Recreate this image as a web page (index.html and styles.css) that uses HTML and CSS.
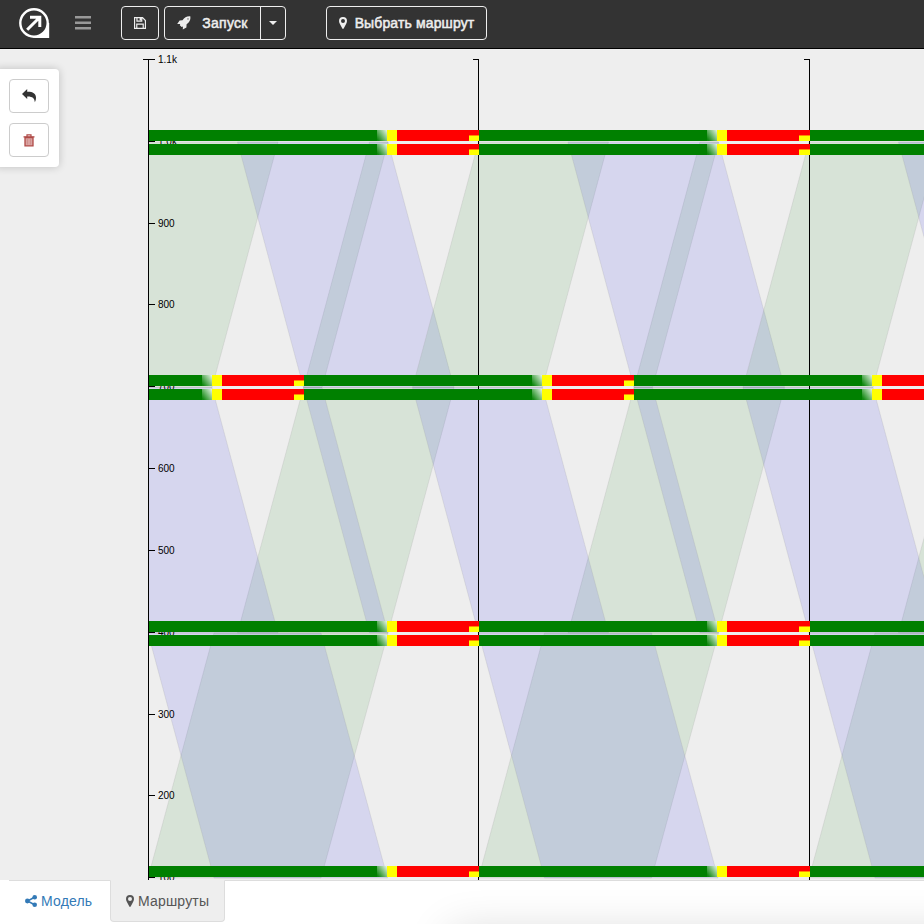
FILE: index.html
```
<!DOCTYPE html>
<html lang="ru">
<head>
<meta charset="utf-8">
<title>Маршруты</title>
<link rel="stylesheet" href="styles.css">
</head>
<body>
<header class="navbar">
  <svg class="logo" width="32" height="32" viewBox="0 0 32 32"><path fill="#fff" d="M30 16h1.2v15H16z"/><circle cx="16" cy="16" r="13.7" fill="#333" stroke="#fff" stroke-width="2.4"/><path d="M9.200 22.800 21 11M12 10.200h9.800v9.800" fill="none" stroke="#fff" stroke-width="3"/></svg>
  <svg class="menu" width="16" height="14" viewBox="0 0 16 14"><path d="M0 1.3h16M0 6.8h16M0 12.3h16" stroke="#999" stroke-width="2.4"/></svg>
  <button class="btn save"><svg width="12" height="12" viewBox="0 0 13 13"><path d="M.6.6h8.6l3.2 3.2v8.6H.6zM3.2.8v3.7h5.2V.8M3 12.3V7.7h7v4.6" fill="none" stroke="#eee" stroke-width="1.3"/><path fill="#eee" d="M6.1.8h2v3h-2z"/></svg></button>
  <div class="group">
    <button class="btn run"><svg width="14" height="14" viewBox="0 0 14 14"><path fill="#eee" fill-rule="evenodd" d="M13.4.4C9.700.1 7.600 1.500 5.500 4.300L2.600 4.500.2 8.100 3.200 8 2.800 9.300 4.600 11.100 5.900 10.600 5.800 13.500 9.400 11.400 9.600 8.300C12.400 6.100 13.700 3.900 13.400.4zM11 2.300a.6.6 0 1 1 0 1.200.6.6 0 0 1 0-1.200z"/></svg><span>Запуск</span></button>
    <button class="btn caret"><i></i></button>
  </div>
  <button class="btn route"><svg width="8" height="12" viewBox="0 0 8 12"><path fill="#eee" fill-rule="evenodd" d="M4 0a4 4 0 0 1 4 4c0 1-.4 1.900-.8 2.700L4.700 11.600Q4 12.400 3.300 11.600L.8 6.700C.4 5.900 0 5 0 4a4 4 0 0 1 4-4zm0 2a2 2 0 1 0 0 4 2 2 0 0 0 0-4z"/></svg><span>Выбрать маршрут</span></button>
</header>
<main class="stage">
  <svg class="chart" width="924" height="831" viewBox="0 49 924 831">
    <defs>
      <clipPath id="plot"><rect x="149" y="49" width="775" height="831"/></clipPath>
      <linearGradient id="blink" x1="0" y1=".8" x2="1" y2="0"><stop offset="0" stop-color="#118811"/><stop offset="1" stop-color="#e6f4e6"/></linearGradient>
      <g id="cycle"><rect width="228.200" height="11" fill="#008000"/><rect x="228" width="10" height="11" fill="url(#blink)"/><rect x="238" width="10" height="11" fill="#ff0"/><rect x="248" width="82.200" height="11" fill="#f00"/><rect x="320" y="5" width="10.200" height="1" fill="#f80"/><rect x="320" y="6" width="10.200" height="5" fill="#ff0"/></g>
      <g id="bar" shape-rendering="crispEdges"><use href="#cycle"/><use href="#cycle" x="330.300"/><use href="#cycle" x="660.900"/></g>
      <g id="waves">
        <g class="up">
          <path d="M148 142H278L212 387.500H82z"/><path d="M369.500 142H388L322 387.500H303.500z"/>
          <path d="M303.500 387.500H454L388 633H237.500z"/>
          <path d="M214 633H388L321 878H148z"/>
        </g>
        <g class="down">
          <path d="M237.500 142H388L454 387.500H303.500z"/>
          <path d="M82 387.500H212L278 633H148z"/><path d="M303.500 387.500H322L388 633H369.500z"/>
          <path d="M148 633H321L387.500 878H214z"/>
        </g>
      </g>
    </defs>
    <g clip-path="url(#plot)"><use href="#waves"/><use href="#waves" x="330.500"/><use href="#waves" x="661"/></g>
    <path class="axis" d="M143 59.500H155M148.500 59V880M473 59.500H478.500V880M804 59.500H809.500V880M149 141.500h6M149 223.500h6M149 304.500h6M149 386.500h6M149 468.500h6M149 550.500h6M149 632.500h6M149 714.500h6M149 795.500h6M149 877.500h6"/>
    <g class="ticks"><text x="158" y="63">1.1k</text><text x="158" y="145">1.0k</text><text x="158" y="227">900</text><text x="158" y="308">800</text><text x="158" y="390">700</text><text x="158" y="472">600</text><text x="158" y="554">500</text><text x="158" y="636">400</text><text x="158" y="718">300</text><text x="158" y="799">200</text><text x="158" y="881">100</text></g>
    <g clip-path="url(#plot)">
      <use href="#bar" x="149" y="130"/><use href="#bar" x="149" y="144"/>
      <use href="#bar" x="-26" y="375"/><use href="#bar" x="-26" y="389"/>
      <use href="#bar" x="304.100" y="375"/><use href="#bar" x="304.100" y="389"/>
      <use href="#bar" x="149" y="621"/><use href="#bar" x="149" y="635"/>
      <use href="#bar" x="149" y="866"/>
    </g>
  </svg>
  <aside class="tools">
    <button class="tool"><svg width="15" height="14" viewBox="0 0 15 14"><path fill="#333" d="M0 5 5.200 0V2.700C10.500 2.500 14 4.500 14 8.500 14 10.500 13.500 12 12.800 13.300 12.600 9.300 10.500 7.200 5.200 7.400V10z"/></svg></button>
    <button class="tool"><svg width="12" height="13" viewBox="0 0 12 13"><path d="M2 3.500h8v8.300H2z" fill="#d9a3a1" stroke="#b04a47" stroke-width="1.300"/><path d="M.5 2.900h11M4 2.500V.9h4v1.600" fill="none" stroke="#b04a47" stroke-width="1.200"/><path d="M4.500 5v5.500M7.500 5v5.500" stroke="#c98380" stroke-width=".6"/></svg></button>
  </aside>
</main>
<footer class="tabs">
  <a class="tab"><svg width="12" height="12" viewBox="0 0 12 12"><path d="M10 2 2.500 6 10 10" fill="none" stroke="#337ab7" stroke-width="1.500"/><g fill="#337ab7"><circle cx="9.700" cy="2.300" r="2.300"/><circle cx="2.400" cy="6" r="2.400"/><circle cx="9.700" cy="9.700" r="2.300"/></g></svg><span>Модель</span></a>
  <a class="tab active"><svg width="8" height="12" viewBox="0 0 8 12"><path fill="#555" fill-rule="evenodd" d="M4 0a4 4 0 0 1 4 4c0 1-.4 1.900-.8 2.700L4.700 11.600Q4 12.400 3.300 11.600L.8 6.700C.4 5.900 0 5 0 4a4 4 0 0 1 4-4zm0 2a2 2 0 1 0 0 4 2 2 0 0 0 0-4z"/></svg><span>Маршруты</span></a>
  <div class="panel-shadow"></div>
</footer>
</body>
</html>
```
FILE: styles.css
```
* { box-sizing: border-box; }
body { margin: 0; width: 924px; height: 924px; overflow: hidden; display: flex; flex-direction: column; background: #eee; font: 14px/20px "Liberation Sans", Arial, sans-serif; }
svg { display: block; flex: none; }
.navbar { height: 49px; flex: none; display: flex; align-items: flex-start; padding: 6px 0 0 18px; background: #333; border-bottom: 1px solid #000; }
.logo { margin-top: 1px; }
.menu { margin: 10px 30px 0 25px; }
.btn { height: 34px; display: flex; align-items: center; justify-content: center; padding: 0; border: 1px solid #eee; border-radius: 4px; background: transparent; color: #eee; font: 14px/20px "Liberation Sans", Arial, sans-serif; letter-spacing: .13px; -webkit-text-stroke: .5px #eee; white-space: nowrap; }
.save { width: 38px; }
.group { display: flex; margin: 0 40px 0 5px; }
.run { width: 97px; gap: 11px; letter-spacing: .3px; border-radius: 4px 0 0 4px; }
.caret { width: 26px; margin-left: -1px; border-radius: 0 4px 4px 0; }
.caret i { border: 4px solid transparent; border-top-color: #eee; border-bottom: 0; }
.route { width: 161px; gap: 8px; }
.stage { position: relative; height: 831px; flex: none; }
.up path { fill: #008000; fill-opacity: .095; stroke: #999; stroke-opacity: .2; }
.down path { fill: #0808f4; fill-opacity: .1; stroke: #999; stroke-opacity: .2; }
.axis { fill: none; stroke: #000; shape-rendering: crispEdges; }
.ticks { font: 10px "Liberation Sans", Arial, sans-serif; fill: #000; }
.tools { position: absolute; left: -5px; top: 20px; width: 64px; height: 98px; padding: 10px 0 0 14px; display: flex; flex-direction: column; gap: 10px; background: #fff; border-radius: 4px; box-shadow: 0 0 8px rgba(0,0,0,.2); }
.tool { width: 40px; height: 34px; display: flex; align-items: center; justify-content: center; padding: 0; background: #fff; border: 1px solid #ccc; border-radius: 4px; }
.tabs { position: relative; height: 44px; flex: none; display: flex; padding-left: 9px; background: linear-gradient(#ddd, #ddd) 9px 0 / 100% 1px no-repeat #fff; overflow: hidden; }
.tab { height: 42px; width: 101px; display: flex; align-items: center; padding-left: 16px; gap: 4px; color: #337ab7; letter-spacing: .18px; }
.tab.active { width: 115px; padding-left: 15px; color: #555; background: #eee; border: 1px solid #ddd; border-top-color: #eee; border-radius: 0 0 4px 4px; }
.panel-shadow { position: absolute; left: 450px; top: 52px; width: 600px; height: 100px; box-shadow: 0 0 45px rgba(0,0,0,.16); }
```
